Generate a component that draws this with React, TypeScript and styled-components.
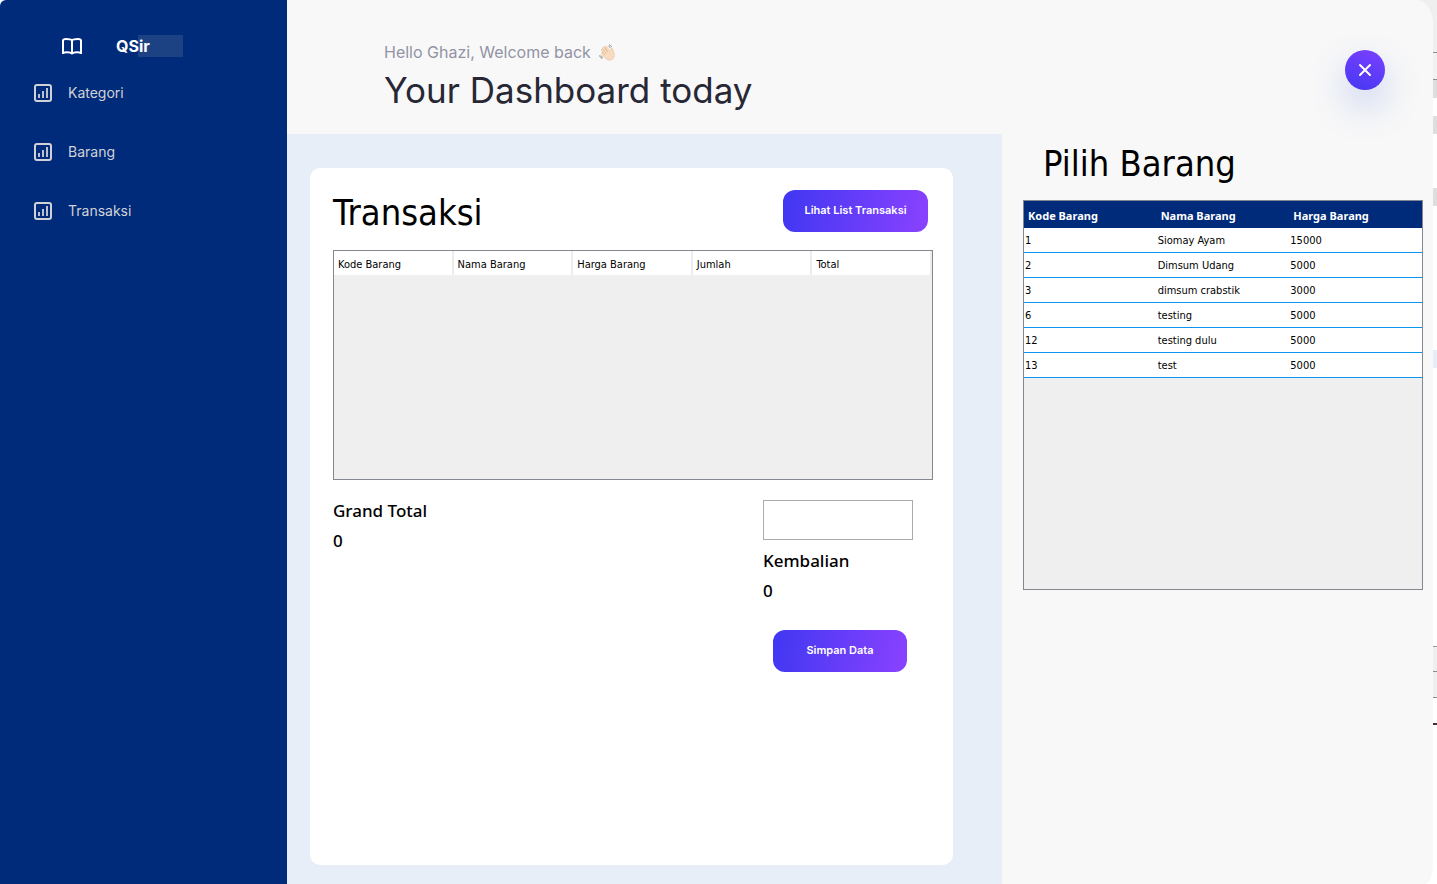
import React from "react";
import styled, { createGlobalStyle } from "styled-components";

const brand = '"Inter", "Open Sans", sans-serif';
const system = '"DejaVu Sans Condensed", "Noto Sans", sans-serif';

const GlobalStyle = createGlobalStyle`
  *, *::before, *::after { box-sizing: border-box; }
  body { margin: 0; background: #ffffff; font-family: ${system}; color: #000000; }
  h1, h2, p, dl, dd, ul { margin: 0; padding: 0; }
`;

const Desktop = styled.div`
  position: relative;
  min-height: 100vh;
  display: flex;
  background: #ffffff;
`;

const WindowBehind = styled.div`
  position: absolute;
  top: 0;
  right: 0;
  width: 30px;
  height: 100%;
  overflow: hidden;
`;

const Strip = styled.div<{ $top: number; $height: number; $color: string; $line?: boolean }>`
  position: absolute;
  left: 0;
  right: 0;
  top: ${(p) => p.$top}px;
  height: ${(p) => p.$height}px;
  background: ${(p) => p.$color};
  border-bottom: ${(p) => (p.$line ? "1px solid #8c8c90" : "none")};
`;

const AppWindow = styled.div`
  position: relative;
  flex: 1;
  min-width: 0;
  display: flex;
  margin-right: 4px;
  border-radius: 6px 16px 8px 0 / 6px 24px 20px 0;
  overflow: hidden;
  background: #f8f8f8;
`;

const Sidebar = styled.aside`
  flex: 0 0 287px;
  background: #002a7a;
  padding: 34px 32px;
`;

const Brand = styled.div`
  display: flex;
  align-items: center;
  height: 24px;
  padding-left: 28px;
  gap: 32px;
  color: #ffffff;
`;

const BrandName = styled.span`
  position: relative;
  width: 67px;
  font: 700 16px/22px ${brand};
  &::before {
    content: "";
    position: absolute;
    inset: 0 0 0 22px;
    background: #1d4284;
  }
`;

const BrandText = styled.span`
  position: relative;
`;

const Menu = styled.ul`
  list-style: none;
  display: flex;
  flex-direction: column;
  gap: 35px;
  margin-top: 23px;
`;

const MenuLink = styled.a`
  display: flex;
  align-items: center;
  gap: 14px;
  height: 24px;
  color: #d0d2d6;
  text-decoration: none;
  font: 400 14px/24px ${brand};
`;

const Main = styled.div`
  flex: 1;
  min-width: 0;
  display: flex;
  flex-direction: column;
`;

const Header = styled.header`
  display: flex;
  justify-content: space-between;
  align-items: flex-start;
  height: 134px;
  padding: 40px 48px 0 97px;
`;

const Greeting = styled.p`
  display: flex;
  align-items: center;
  gap: 8px;
  color: #9293a5;
  font: 400 16px/24px ${brand};
`;

const PageTitle = styled.h1`
  margin-top: 4px;
  color: #272735;
  font: 400 35px/44px ${brand};
`;

const CloseButton = styled.button`
  display: grid;
  place-items: center;
  width: 40px;
  height: 40px;
  margin-top: 10px;
  padding: 0;
  border: 0;
  border-radius: 50%;
  background: linear-gradient(20deg, #4538f2, #7b40ff);
  box-shadow: 0 16px 36px rgba(65, 95, 225, 0.26);
`;

const Body = styled.div`
  flex: 1;
  display: flex;
`;

const Workspace = styled.main`
  flex: 1;
  min-width: 0;
  display: flex;
  padding: 34px 49px 19px 23px;
  background: #e7eef7;
`;

const Card = styled.section`
  flex: 1;
  min-width: 0;
  padding: 22px 20px 22px 23px;
  border-radius: 10px;
  background: #ffffff;
`;

const CardHead = styled.div`
  display: flex;
  justify-content: space-between;
  align-items: flex-start;
  padding-right: 5px;
  margin-bottom: 14px;
`;

const Title = styled.h2`
  font: 400 36px/46px ${system};
`;

const ActionButton = styled.button<{ $width: number }>`
  width: ${(p) => p.$width}px;
  height: 42px;
  padding: 0 0 2px;
  border: 0;
  border-radius: 12px;
  background: linear-gradient(100deg, #4037f2, #8a42ff);
  color: #ffffff;
  font: 600 11px/16px ${brand};
`;

const Scroll = styled.div<{ $height: number }>`
  height: ${(p) => p.$height}px;
  border: 1px solid #828790;
  background: #efefef;
`;

const CartTable = styled.table`
  width: 100%;
  table-layout: fixed;
  border-collapse: separate;
  border-spacing: 0;
  background: #ffffff;
  th {
    height: 24px;
    padding: 3px 0 0 4px;
    border-right: 2px solid #ececec;
    text-align: left;
    font: 400 11px/14px ${system};
  }
`;

const GoodsTable = styled.table`
  width: 100%;
  table-layout: fixed;
  border-collapse: separate;
  border-spacing: 0;
  background: #ffffff;
  th {
    height: 27px;
    padding: 3px 0 0 4px;
    background: #002a7a;
    color: #ffffff;
    text-align: left;
    font: 700 11px/16px "Noto Sans", sans-serif;
  }
  td {
    height: 25px;
    padding: 1px 1px 0;
    border-bottom: 1px solid #0c94f2;
    font: 400 11px/14px ${system};
  }
`;

const Summary = styled.div`
  display: flex;
  justify-content: space-between;
  padding: 20px 20px 0 0;
`;

const Payment = styled.div`
  width: 150px;
`;

const Figures = styled.dl`
  font: 500 17px/22px "Noto Sans", sans-serif;
  dd { margin-top: 8px; }
`;

const AmountInput = styled.input`
  display: block;
  width: 100%;
  height: 40px;
  margin-bottom: 10px;
  padding: 0 8px;
  border: 1px solid #ababab;
  background: #ffffff;
  font: 400 18px/22px ${system};
`;

const SaveRow = styled.div`
  padding: 28px 0 0 10px;
`;

const Picker = styled.section`
  flex: 0 0 431px;
  padding: 7px 10px 0 21px;
`;

const PickerTitle = styled(Title)`
  padding: 0 0 13px 20px;
`;

const BookIcon = () => (
  <svg width="24" height="24" viewBox="0 0 24 24" fill="none" stroke="currentColor" strokeWidth="2" aria-hidden="true">
    <path d="M3 20V6.5C3 5.500 4 5 6 5s5 .2 6 1.500C13 5.200 16 5 18 5s3 .5 3 1.500V20M12 6.500V20" />
    <path d="M3 19c2-1.200 7-1.200 9 .5 2-1.700 7-1.700 9-.5" />
  </svg>
);

const ChartIcon = () => (
  <svg width="22" height="22" viewBox="0 0 22 22" fill="none" stroke="currentColor" strokeWidth="2" aria-hidden="true">
    <rect x="3" y="3" width="16" height="16" rx="2" />
    <path d="M7 16v-4M11 16v-7M15 16V6" strokeWidth="1.800" />
  </svg>
);

const WaveIcon = () => (
  <svg width="17" height="17" viewBox="0 0 17 17" aria-hidden="true">
    <path
      d="M4 3.2c.8-.6 1.4 0 1.8.6l2 2.5-1.6-3c-.6-1.3.9-2 1.6-.8l2.5 4c.8 1 1.4.7 1.3-.6-.1-2 1.7-2.4 2.1-.8.2 1.2.8 2.3 1.2 3.6 1.3 3.6-.2 6.6-3.3 7.3-2.2.5-4-.5-5.400-2.200L2.700 9.900c-.8-1.100.5-2 1.400-1.100L2.600 6.700c-.7-1 .6-2 1.500-1L3.700 5c-.5-.7-.2-1.400.3-1.800Z"
      fill="#f8dcc0"
      stroke="#e3b48f"
      strokeWidth=".5"
    />
    <path d="m4.1 5.7 3.3 4.2M5.8 3.8l3.3 4.7M4.1 8.8l2 2.3" stroke="#dca77d" strokeWidth=".6" fill="none" />
    <path d="M10 .8c1.4.3 2.2 1 2.6 2.3M9.4 2.2c1 .3 1.5.9 1.8 1.7M.6 11.4c.3 1.7 1.2 2.7 2.8 3.1M2 11.4c.3 1 .9 1.6 1.9 2" stroke="#6f767d" strokeWidth=".8" fill="none" />
  </svg>
);

const CloseIcon = () => (
  <svg width="14" height="14" viewBox="0 0 14 14" stroke="#ffffff" strokeWidth="2" strokeLinecap="round" aria-hidden="true">
    <path d="m2 2 10 10M12 2 2 12" />
  </svg>
);

const menu = ["Kategori", "Barang", "Transaksi"];
const cartColumns = ["Kode Barang", "Nama Barang", "Harga Barang", "Jumlah", "Total"];
const goodsColumns = ["Kode Barang", "Nama Barang", "Harga Barang"];
const goods = [
  ["1", "Siomay Ayam", "15000"],
  ["2", "Dimsum Udang", "5000"],
  ["3", "dimsum crabstik", "3000"],
  ["6", "testing", "5000"],
  ["12", "testing dulu", "5000"],
  ["13", "test", "5000"],
];

export default function App() {
  return (
    <Desktop>
      <GlobalStyle />
      <WindowBehind aria-hidden="true">
        <Strip $top={0} $height={53} $color="#efefef" $line />
        <Strip $top={53} $height={27} $color="#f1f1f1" $line />
        <Strip $top={80} $height={18} $color="#dedede" />
        <Strip $top={116} $height={18} $color="#dedede" />
        <Strip $top={188} $height={18} $color="#dedede" />
        <Strip $top={350} $height={18} $color="#e7eef7" />
        <Strip $top={646} $height={1} $color="#9a9a9e" />
        <Strip $top={647} $height={25} $color="#efefef" $line />
        <Strip $top={672} $height={26} $color="#efefef" $line />
        <Strip $top={723} $height={2} $color="#3b2f3a" />
      </WindowBehind>
      <AppWindow>
        <Sidebar>
          <Brand>
            <BookIcon />
            <BrandName>
              <BrandText>QSir</BrandText>
            </BrandName>
          </Brand>
          <nav>
            <Menu>
              {menu.map((label) => (
                <li key={label}>
                  <MenuLink href="#">
                    <ChartIcon />
                    {label}
                  </MenuLink>
                </li>
              ))}
            </Menu>
          </nav>
        </Sidebar>
        <Main>
          <Header>
            <div>
              <Greeting>
                Hello Ghazi, Welcome back <WaveIcon />
              </Greeting>
              <PageTitle>Your Dashboard today</PageTitle>
            </div>
            <CloseButton type="button" aria-label="Close">
              <CloseIcon />
            </CloseButton>
          </Header>
          <Body>
            <Workspace>
              <Card>
                <CardHead>
                  <Title>Transaksi</Title>
                  <ActionButton type="button" $width={145}>Lihat List Transaksi</ActionButton>
                </CardHead>
                <Scroll $height={230}>
                  <CartTable>
                    <thead>
                      <tr>
                        {cartColumns.map((c) => (
                          <th key={c} scope="col">{c}</th>
                        ))}
                      </tr>
                    </thead>
                  </CartTable>
                </Scroll>
                <Summary>
                  <Figures>
                    <dt>Grand Total</dt>
                    <dd>0</dd>
                  </Figures>
                  <Payment>
                    <AmountInput type="text" aria-label="Bayar" />
                    <Figures>
                      <dt>Kembalian</dt>
                      <dd>0</dd>
                    </Figures>
                    <SaveRow>
                      <ActionButton type="button" $width={134}>Simpan Data</ActionButton>
                    </SaveRow>
                  </Payment>
                </Summary>
              </Card>
            </Workspace>
            <Picker>
              <PickerTitle>Pilih Barang</PickerTitle>
              <Scroll $height={390}>
                <GoodsTable>
                  <thead>
                    <tr>
                      {goodsColumns.map((c) => (
                        <th key={c} scope="col">{c}</th>
                      ))}
                    </tr>
                  </thead>
                  <tbody>
                    {goods.map((row) => (
                      <tr key={row[0]}>
                        {row.map((cell, i) => (
                          <td key={i}>{cell}</td>
                        ))}
                      </tr>
                    ))}
                  </tbody>
                </GoodsTable>
              </Scroll>
            </Picker>
          </Body>
        </Main>
      </AppWindow>
    </Desktop>
  );
}
